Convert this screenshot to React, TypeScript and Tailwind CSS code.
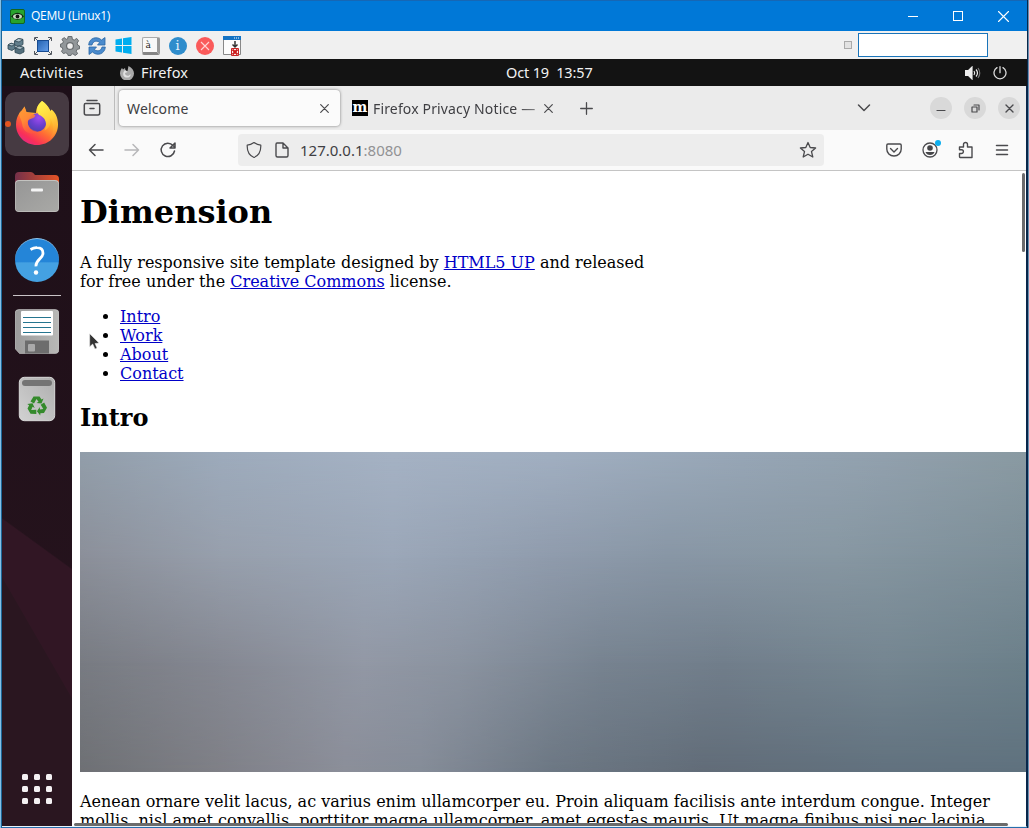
import React from 'react';

const Firefox = () => (
  <svg width="44" height="46" viewBox="0 0 44 46">
    <defs>
      <linearGradient id="flame" x1="0.85" y1="0.05" x2="0.25" y2="1">
        <stop offset="0" stopColor="#fff04a" /><stop offset="0.35" stopColor="#ffb52b" />
        <stop offset="0.62" stopColor="#ff6a35" /><stop offset="0.85" stopColor="#f92f59" /><stop offset="1" stopColor="#e02a86" />
      </linearGradient>
      <radialGradient id="globe" cx="0.6" cy="0.25" r="0.8">
        <stop offset="0" stopColor="#a04bf0" /><stop offset="0.55" stopColor="#6a3fce" /><stop offset="1" stopColor="#4a3fae" />
      </radialGradient>
      <linearGradient id="crest" x1="0.3" y1="0" x2="0.6" y2="1">
        <stop offset="0" stopColor="#fff44f" /><stop offset="0.5" stopColor="#ffd23c" /><stop offset="1" stopColor="#ff8f34" stopOpacity="0.3" />
      </linearGradient>
      <linearGradient id="fox" x1="0" y1="0" x2="0.6" y2="1">
        <stop offset="0" stopColor="#ff9f32" /><stop offset="0.5" stopColor="#ff8a36" /><stop offset="1" stopColor="#ff5d3f" stopOpacity="0.5" />
      </linearGradient>
    </defs>
    <path d="M27 1c5 3 7 7 8.500 10l1-1.500c5 4 6.500 9.500 6.500 15C43 36 34 45 22 45S1 36 1 24.500c0-5 1.500-8.500 3.500-11.500l.8-2 .8 2.500L9.500 6.500l2 5.500 9.500 1c0-5 2.500-9 6-12z" fill="url(#flame)" />
    <circle cx="22" cy="22.500" r="9.300" fill="url(#globe)" />
    <path d="M27 1c-6 5-6 10-3 14 6 2 9 8 5.500 15.500C35 28 36.500 23 35 18c5 8 4 15-1 22 10-8 11-22 2.500-30l-1 1.500C33 7 31 3.500 27 1z" fill="url(#crest)" />
    <path d="M4 14l5.500-7.500 2 6.500c3.500-.5 6 .5 9 2.500-1 2.300-3 2.800-5.500 3.800-1.500.7-2.500 1.200-2.300 3.500.5 5 4.500 8 9.500 8.200-5 5-14 2-15-7-.5-4-2-5-3.200-10z" fill="url(#fox)" />
  </svg>
);

const Folder = () => (
  <svg width="44" height="42" viewBox="0 0 44 42">
    <defs>
      <linearGradient id="fback"><stop offset="0" stopColor="#74304a" /><stop offset="1" stopColor="#e55326" /></linearGradient>
      <linearGradient id="ffront" x1="0" y1="0" x2="1" y2="1"><stop offset="0" stopColor="#969696" /><stop offset="1" stopColor="#a9a9a6" /></linearGradient>
    </defs>
    <path d="M0 16V5q0-4 4-4h12q2 0 4 3h20q4 0 4 4v8z" fill="url(#fback)" />
    <rect y="9" width="44" height="32" rx="4" fill="#c3c3c0" />
    <rect x=".6" y="10" width="42.800" height="30.300" rx="3.500" fill="url(#ffront)" />
    <rect x="16" y="17.500" width="12" height="3" rx="1" fill="#f5f5f5" />
  </svg>
);

const Help = () => (
  <div className="flex size-[44px] items-center justify-center rounded-full border-t border-[#8dc7f0] bg-linear-to-b from-[#2485d8] from-54% to-[#44a1e2] to-55%">
    <svg width="18" height="30" viewBox="0 0 18 30" fill="none">
      <path d="M2.500 3.500Q6 1.500 9 1.700c4 0 6 2.300 6 5.600 0 5.500-7.500 6-7 13" stroke="white" strokeWidth="2.800" />
      <circle cx="8" cy="26.500" r="2.200" fill="white" />
    </svg>
  </div>
);

const Floppy = () => (
  <svg width="44" height="45" viewBox="0 0 44 45">
    <defs><linearGradient id="floppy"><stop offset="0" stopColor="#9c9c9c" /><stop offset="1" stopColor="#b8b8b6" /></linearGradient></defs>
    <path d="M4 .5h36q4 0 4 4V40q0 4.500-4 4.500H4.500L0 39.500v-35q0-4 4-4z" fill="url(#floppy)" stroke="#c9c9c9" strokeWidth=".6" />
    <rect x="6" y="2" width="32" height="24.500" rx="1" fill="#fff" />
    <path d="M8 8h28M8 13h28M8 18h28M8 23h28" stroke="#25758f" shapeRendering="crispEdges" />
    <path d="M10 31.500h24v13H10z" fill="#6d6d6d" />
    <rect x="13" y="35" width="7" height="7.500" rx="1" fill="#aaa" />
  </svg>
);

const Trash = () => (
  <svg width="38" height="46" viewBox="0 0 38 46">
    <defs><linearGradient id="bin" x1="1" y1="0" x2="0" y2="1"><stop offset="0" stopColor="#aeaeae" /><stop offset="1" stopColor="#d2d2d2" /></linearGradient></defs>
    <rect x="1.300" y="1.300" width="35.400" height="43.400" rx="5" fill="url(#bin)" stroke="#d9d9d9" />
    <rect x="4" y="4" width="30" height="6" rx="3" fill="#747474" />
    <g transform="translate(19 30)" fill="#348a2b">
      {[0, 120, 240].map((a) => (
        <path key={a} transform={`rotate(${a})`} d="M-6.500-4.500L-3.500-9.500H2.500L4.500-6.500 6.500-7.500 4.500-2.500-.5-3 1.500-4.200-.5-7-3-2.500z" />
      ))}
    </g>
  </svg>
);

const LineIcon = ({ d, size = 18, color = '#4a4a4d', width = 1.5 }: { d: string; size?: number; color?: string; width?: number }) => (
  <svg width={size} height={size} viewBox={`0 0 ${size} ${size}`} fill="none" stroke={color} strokeWidth={width} strokeLinecap="round" strokeLinejoin="round" className="block shrink-0">
    <path d={d} />
  </svg>
);

const GEAR = 'M8 0h4l.5 3 2 .8L17 2l2 2.500-1.500 2.500.6 2L20 10v3l-2.500.5-1 2L18 18l-2.500 2-2.500-1.800-1.500.5L11 20H8l-.6-2-2-.8L3 18l-2-2.500 1.500-2-.7-2L0 11V8l2.200-.6.8-2L1.500 3 4 1.200 6 3l1.500-.5z';

const Toolbar = () => (
  <div className="flex h-[28px] items-center bg-[#f0f0f0]">
    <div className="grid h-full grid-cols-[repeat(9,27px)] items-center justify-items-center pt-[1px]">
      <svg width="18" height="18" viewBox="0 0 18 18" stroke="#2d4653" strokeWidth=".8" strokeLinejoin="round">
        <path d="M7.500 4L11.500 1.500 16 2.500v5L12 9.500 7.500 8z" fill="#617e8c" /><path d="M7.500 4l4-2.500L16 2.500 12 5z" fill="#b4c6ce" />
        <path d="M1 8l3-1.800L8 7.500v4L5 13.500l-4-1.500z" fill="#617e8c" /><path d="M1 8l3-1.800L8 7.500 5 9z" fill="#b4c6ce" />
        <path d="M8 11l4-2 5 1.500v4.500L13 17l-5-1.500z" fill="#546f7c" /><path d="M8 11l4-2 5 1.500-4 2z" fill="#a9bcc5" />
      </svg>
      <svg width="18" height="18" viewBox="0 0 18 18"><defs><linearGradient id="fs" x1="0" y1="0" x2="1" y2="1"><stop stopColor="#2463b1" /><stop offset="1" stopColor="#649eea" /></linearGradient></defs><rect x="3.500" y="3.500" width="11" height="11" fill="url(#fs)" stroke="#174b91" /><path d="M0.500 4V.5H4M1 1l2 2M14 .5h3.500V4M17 1l-2 2M.5 14v3.500H4M1 17l2-2M17.500 14v3.500H14M17 17l-2-2" fill="none" stroke="#525860" /></svg>
      <svg width="20" height="20" viewBox="-.5 -.5 21 21"><path d={GEAR} fill="#92979a" stroke="#62676a" /><circle cx="10" cy="10" r="3.600" fill="#f0f0f0" stroke="#696d70" strokeWidth="1.300" /></svg>
      <svg width="18" height="18" viewBox="0 0 18 18"><path d="M.7 8C1 1 9-1.500 13.500 3L17 .5V8H9.500l2.200-2.500C8 2.500 4.500 5 4 8zM17.300 10C17 17 9 19.500 4.500 15L1 17.500V10h7.500l-2.200 2.500C10 15.500 13.500 13 14 10z" fill="#4b8bcd" stroke="#2866a4" strokeWidth=".8" /></svg>
      <svg width="17" height="17" viewBox="0 0 17 17" fill="#00adef"><path d="M.5 2.500L7 1.500v6.500H.5zM8 1.300L16.500 0v8H8zM.5 9H7v6.500l-6.500-1zM8 9h8.500v8L8 15.700z" /></svg>
      <div className="flex size-[18px] rounded-[2px] border border-[#aaa] border-r-[3px] border-b-[3px] border-r-[#999] border-b-[#858585] bg-[#f8f8f8] pl-[3px] font-['DejaVu_Serif',serif] text-[9px] leading-[14px] text-[#222]">à</div>
      <div className="flex size-[18px] items-center justify-center rounded-full bg-[#2f8dcc] font-['DejaVu_Serif',serif] text-[13px] text-[#e5f3fc]">i</div>
      <svg width="18" height="18" viewBox="0 0 18 18"><circle cx="9" cy="9" r="9" fill="#fa5a5a" /><path d="M5 5l8 8M13 5l-8 8" stroke="#ffd5d5" strokeWidth="1.100" /></svg>
      <svg width="18" height="20" viewBox="0 0 18 20"><path d="M.5.500h17v18H.5z" fill="#fcfcfc" stroke="#888" /><path d="M0 0h18v4H0z" fill="#1574c4" /><path d="M11 2h1m1 0h1m1 0h1" stroke="white" /><path d="M12 5v6M9.500 8.500L12 11l2.500-2.500" fill="none" stroke="#333" strokeWidth="1.500" /><path d="M8.500 12.500h7v7h-7z" fill="white" stroke="#c72525" /><path d="M9.500 13.500l5 5m0-5l-5 5" stroke="#cc1d1d" strokeWidth="2" /></svg>
    </div>
    <div className="ml-[599px] size-[8px] border border-[#aaa] bg-[#e2e2e2]" />
    <div className="ml-[6px] h-[24px] w-[130px] border border-[#1a74b9] bg-white" />
  </div>
);

const TitleBar = () => (
  <div className="flex h-[31px] items-center border-t border-[#1667b5] bg-[#0078d7] pl-[8px] text-white">
    <svg width="15" height="15" viewBox="0 0 15 15"><rect x=".5" y=".5" width="14" height="14" rx="1.500" fill="#28a32d" stroke="#13651f" /><path d="M1 7.500Q7.500 0 14 7.500 7.500 14 1 7.500z" fill="#132a13" /><ellipse cx="7.500" cy="7.500" rx="4.500" ry="2.500" fill="#c5ddc1" /><circle cx="7.500" cy="7.500" r="1.900" fill="#111" /></svg>
    <span className="ml-[6px] font-['Open_Sans',sans-serif] text-[12px] tracking-[-0.3px]">QEMU (Linux1)</span>
    <div className="ml-auto flex items-center gap-[35px] pr-[18px]">
      <LineIcon size={10} width={1} color="white" d="M0 5.500h10" />
      <div className="size-[10px] border border-white" />
      <LineIcon size={11} width={1.1} color="white" d="M.5.500l10 10M10.500.500l-10 10" />
    </div>
  </div>
);

const SystemBar = () => (
  <div className="grid h-[27px] grid-cols-[118px_1fr_62px] items-center bg-[#131313] font-['Noto_Sans',sans-serif] text-[14.500px] text-[#f2f2f2]">
    <span className="pl-[18px] text-[14.5px] tracking-[0.3px]">Activities</span>
    <div className="flex items-center text-[14.5px]">
      <svg width="14" height="14" viewBox="0 0 14 14"><path d="M8.500 0C12 1.500 14 4.500 14 7.500a7 7 0 01-14 0C0 5 1 3 2 2l1 1.500 2-1.500.5 2.500L7.500 5z" fill="#aaa" /><path d="M5 4l2.500 2L5 7c0 3 4 4 5.500 1C11 11 8 12 6 11.500 3 11 2 7 5 4z" fill="#e1e1e1" /></svg>
      <span className="ml-[7px] w-[48px] whitespace-nowrap tracking-[0.1px]">Firefox</span>
      <span className="ml-[317px] whitespace-pre tracking-[-0.15px]">Oct 19  13:57</span>
    </div>
    <div className="flex items-center gap-[12px]">
      <svg width="16" height="14" viewBox="0 0 16 14" fill="none" stroke="#eee" strokeWidth="1.200"><path d="M.5 4.500h3L7 1v12L3.500 9.500h-3z" fill="#eee" /><path d="M9 5q1.500 2 0 4M11 3.500q3 3.500 0 7" /><path d="M13 2q3.500 5 0 10" stroke="#777" /></svg>
      <LineIcon size={14} width={1.3} color="#ddd" d="M7 .7v6M4 1.600a6 6 0 106 0" />
    </div>
  </div>
);

const Dock = () => (
  <div className="flex w-[70px] shrink-0 flex-col items-center gap-[4px] bg-[linear-gradient(240deg,#2a162000_71%,#2a1620_71.2%),linear-gradient(216deg,#31162400_61%,#311624_61.2%),linear-gradient(#1d0f18,#28141e)] pt-[6px]">
    <div className="relative flex size-[64px] items-center justify-center rounded-[10px] bg-[#463a42] pr-[1px] pb-[2px]">
      <Firefox />
      <div className="absolute top-[29px] left-[0px] size-[6px] rounded-full bg-[#e4541f]" />
    </div>
    <div className="flex size-[64px] items-center justify-center"><Folder /></div>
    <div className="flex size-[64px] items-center justify-center"><Help /></div>
    <div className="-mt-[1px] -mb-[1px] h-px w-[48px] bg-[#c9c3c7]" />
    <div className="flex size-[64px] items-center justify-center"><Floppy /></div>
    <div className="flex size-[64px] items-center justify-center"><Trash /></div>
    <div className="mt-auto mb-[22px] grid grid-cols-3 gap-[6px]">
      {Array.from({ length: 9 }, (_, i) => <div key={i} className="size-[6px] rounded-[1.5px] bg-[#f4f1f3]" />)}
    </div>
  </div>
);

const TabBar = () => (
  <div className="flex h-[44px] shrink-0 items-center bg-[#ebebeb] font-['Noto_Sans',sans-serif] text-[14px] tracking-[0.15px] text-[#3f3f43]">
    <div className="flex h-full w-[43px] items-center border-r border-[#bcbcbc] pl-[11px]">
      <LineIcon d="M4 1.500h10M2.500 4.500h13q1.200 0 1.200 1.500v8q0 2-1.700 2H3Q1.300 16 1.300 14V6q0-1.500 1.200-1.500zM7 9.500h4" />
    </div>
    <div className="ml-[4px] flex h-[36px] w-[221px] items-center justify-between rounded-[4px] bg-[#fbfbfb] pr-[11px] pl-[8px] shadow-[0_0_3px_#777]">
      <span>Welcome</span>
      <LineIcon size={9} width={1.2} d="M.7.700l7.600 7.600M8.300.700L.7 8.300" />
    </div>
    <div className="ml-[12px] flex size-[16px] items-center justify-center bg-black pb-[2px] font-['DejaVu_Serif',serif] text-[14px] leading-none font-bold text-white">m</div>
    <div className="ml-[5px] w-[163px] overflow-hidden [mask-image:linear-gradient(to_right,black_88%,#0009)]"><span className="whitespace-nowrap">Firefox Privacy Notice —</span></div>
    <div className="ml-[8px]"><LineIcon size={9} width={1.2} d="M.7.700l7.600 7.600M8.300.700L.7 8.300" /></div>
    <div className="ml-[27px]"><LineIcon size={13} width={1.3} d="M6.500.7v11.600M.7 6.500h11.600" /></div>
    <div className="ml-auto flex items-center pr-[6px]">
      <LineIcon size={14} d="M1.500 4L7 9.500 12.500 4" />
      <div className="ml-[59px] flex gap-[12px]">
        <div className="flex size-[22px] items-center justify-center rounded-full bg-[#d9d9d9]"><LineIcon size={10} width={1.2} d="M1 7.500h8" /></div>
        <div className="flex size-[22px] items-center justify-center rounded-full bg-[#d9d9d9]"><LineIcon size={9} width={1.2} d="M1 3h5v5H1zM3 1h5v5" /></div>
        <div className="flex size-[22px] items-center justify-center rounded-full bg-[#d9d9d9]"><LineIcon size={9} width={1.4} d="M1 1l7 7M8 1L1 8" /></div>
      </div>
    </div>
  </div>
);

const NavBar = () => (
  <div className="flex h-[41px] shrink-0 items-center border-b border-[#c4c4c4] bg-[#fafafa]">
    <div className="flex gap-[18px] pl-[15px]">
      <LineIcon d="M16 9H2.500M8 3.500L2.500 9 8 14.500" />
      <LineIcon color="#b7b7b9" d="M2 9h13.500M10 3.500l5.500 5.500-5.500 5.500" />
      <LineIcon d="M15.500 10A6.700 6.700 0 1114 4.500l2 2M16 2v5h-5z" />
    </div>
    <div className="ml-[61px] flex h-[32px] w-[586px] items-center rounded-[4px] bg-[#ededed] pr-[7px] pl-[7px]">
      <LineIcon width={1.2} d="M9 1.500C6.500 3.300 4.500 4 2.200 4.200 2 10 4 14.500 9 16.500 14 14.500 16 10 15.800 4.200 13.500 4 11.500 3.300 9 1.500z" />
      <div className="ml-[10px]"><LineIcon width={1.4} d="M4 2h6l5 5v7.500q0 1.500-1.500 1.500h-9Q3 16 3 14.500V3.500Q3 2 4 2zM10 2v5h5z" /></div>
      <span className="ml-[9px] font-['Noto_Sans',sans-serif] text-[15px] text-[#3f3f43]">127.0.0.1<span className="text-[#929294]">:8080</span></span>
      <div className="ml-auto"><LineIcon width={1.3} d="M9 1.500l2.200 5 5.400.5-4.100 3.600 1.300 5.400L9 13.200 4.200 16l1.300-5.400L1.400 7l5.400-.5z" /></div>
    </div>
    <div className="ml-auto flex items-center gap-[18px] pr-[15px]">
      <LineIcon width={1.4} d="M3 3h12q1.200 0 1.200 1.200V8c0 4-3 7-7.200 7S1.800 12 1.800 8V4.200Q1.800 3 3 3zM5.500 7.500L9 11l3.500-3.500" />
      <div className="relative">
        <svg width="18" height="18" viewBox="0 0 18 18" className="block"><circle cx="9" cy="9" r="7" fill="none" stroke="#4a4a4d" strokeWidth="1.300" /><circle cx="9" cy="7" r="2.800" fill="#454548" /><path d="M4.500 11h9Q12.500 14 9 14t-4.500-3z" fill="#454548" /></svg>
        <div className="absolute -top-[1px] left-[14px] size-[6px] rounded-full bg-[#0eafee]" />
      </div>
      <LineIcon width={1.4} d="M2.500 6h4V3.500a2 2 0 014 0V6h4.500v10.500H3q-.5 0-.5-1v-3h2a1.900 1.900 0 000-3.800h-2z" />
      <LineIcon width={1.5} d="M3.500 4.500h11M3.500 9h11M3.500 13.500h11" />
    </div>
  </div>
);

const Banner = () => (
  <div className="mt-[20px] grid h-[320px] *:[grid-area:1/1]">
    <div className="bg-[linear-gradient(90deg,#929eaa,#9dabbc_15%,#a5b2c4_33%,#a1afc1_50%,#97a6b6_70%,#92a1ae_85%,#8a9aa2)]" />
    <div className="bg-[linear-gradient(90deg,#8b8f99,#979fac_15%,#9ba7b8_33%,#8f9bac_50%,#8896a5_62%,#8797a2_80%,#7c8e98)] [mask-image:linear-gradient(transparent,black_33%)]" />
    <div className="bg-[linear-gradient(90deg,#787b82,#858892_15%,#9298a5_30%,#8b93a0_40%,#778390_55%,#717e8b_68%,#758691_85%,#6c808a)] [mask-image:linear-gradient(transparent_33%,black_66%)]" />
    <div className="bg-[linear-gradient(90deg,#6e7074,#7f8087_15%,#8b8e99_28%,#858c98_36%,#6c7783_50%,#616c78_66%,#61717e_85%,#5f717e)] [mask-image:linear-gradient(transparent_66%,black)]" />
  </div>
);

const Page = () => (
  <div className="relative min-h-0 flex-1 overflow-hidden bg-white pl-[8px] font-['DejaVu_Serif',serif] text-[16px] leading-[19px] text-black">
    <h1 className="mt-[22px] text-[32px] leading-[38px] font-bold">Dimension</h1>
    <p className="mt-[22px] whitespace-nowrap">A fully responsive site template designed by <a className="text-[#0000c8] underline">HTML5 UP</a> and released<br />for free under the <a className="text-[#0000c8] underline">Creative Commons</a> license.</p>
    <ul className="mt-[16px] list-disc pl-[40px]">
      {['Intro', 'Work', 'About', 'Contact'].map((t) => <li key={t}><a className="text-[#0000c8] underline">{t}</a></li>)}
    </ul>
    <h2 className="mt-[21px] text-[24px] leading-[28px] font-bold">Intro</h2>
    <Banner />
    <p className="mt-[20px] whitespace-nowrap">Aenean ornare velit lacus, ac varius enim ullamcorper eu. Proin aliquam facilisis ante interdum congue. Integer<br />mollis, nisl amet convallis, porttitor magna ullamcorper, amet egestas mauris. Ut magna finibus nisi nec lacinia.</p>
    <div className="absolute top-[2px] right-[1px] h-[79px] w-[3px] rounded-full bg-[#6b6b6e]" />
    <div className="absolute bottom-0 left-[2px] h-[3px] w-[934px] rounded-full bg-[#6b6b6b]" />
    <svg className="absolute top-[162px] left-[17px]" width="12" height="18" viewBox="0 0 12 18"><path d="M.7.700v13l3-2.700 2.300 5 2-1-2-4.500 4-.5z" fill="#333" stroke="#eee" strokeWidth=".5" /></svg>
  </div>
);

export default function App() {
  return (
    <div className="flex h-[828px] w-[1029px] overflow-hidden bg-[#14365c]">
      <div className="w-[2px] shrink-0 border-l border-[#85bfe5] bg-[#1c6698]" />
      <div className="flex w-[1025px] shrink-0 flex-col border-b border-[#266eac]">
        <TitleBar />
        <Toolbar />
        <SystemBar />
        <div className="flex min-h-0 flex-1 border-r border-b border-r-[#08264a] border-b-[#e8f3fa]">
          <Dock />
          <div className="flex min-w-0 flex-1 flex-col">
            <TabBar />
            <NavBar />
            <Page />
          </div>
        </div>
      </div>
      <div className="w-[2px] border-r border-[#6990b0] bg-[#08264a]" />
    </div>
  );
}
